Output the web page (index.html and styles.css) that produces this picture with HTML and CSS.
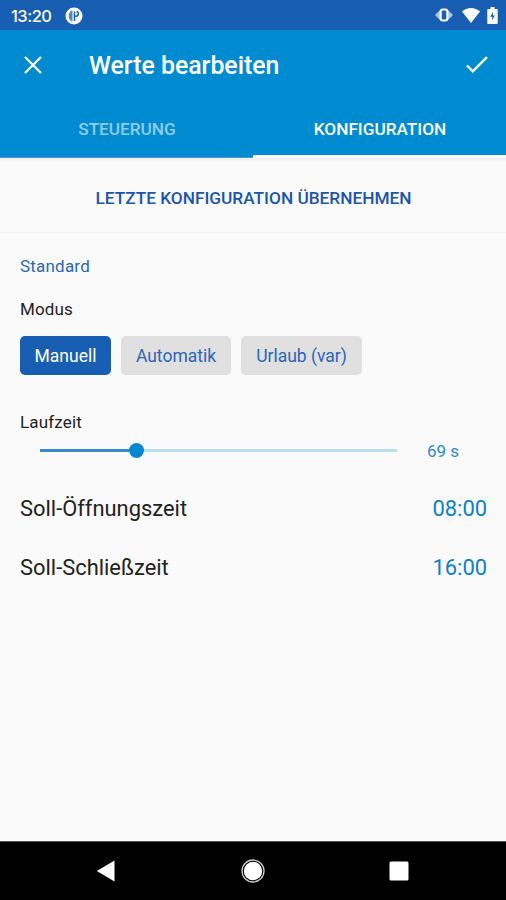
FILE: index.html
```html
<!DOCTYPE html>
<html lang="de">
<head>
<meta charset="utf-8">
<title>Werte bearbeiten</title>
<link rel="stylesheet" href="styles.css">
</head>
<body>
<div class="app">
  <header class="status">
    <span class="clock">13:20</span>
    <svg class="status-app" width="18" height="18" viewBox="0 0 18 18"><circle cx="9" cy="9" r="8.500" fill="#fff"/><path d="M7.500 3.500C5 3.800 3.700 6 3.700 9s1.300 5 3.800 5.500z" fill="#185fb4" opacity=".75"/><path d="M9.500 14V4.500M9.500 9.300h1.500q2.300-.3 2.300-2.500T11.500 4.500" fill="none" stroke="#185fb4" stroke-width="1.500"/></svg>
    <div class="status-right">
      <svg class="vibrate" width="18" height="14" viewBox="0 0 18 14"><path d="M5 2v10L0 7zM13 2v10L18 7z" fill="#fff" opacity=".65"/><rect x="5.700" y="1.500" width="6.600" height="11" rx="2" fill="none" stroke="#fff" stroke-width="2"/></svg>
      <svg class="wifi" width="20" height="17" viewBox="0 0 20 17"><path d="M1 4.500C6-.2 14-.2 19 4.500L10 16z" fill="#fff"/></svg>
      <svg class="battery" width="11" height="17" viewBox="0 0 11 17"><path d="M3.500 0h4v2H10q.7 0 .7.700v13.300q0 1-.7 1H1q-.7 0-.7-1V2.700Q.3 2 1 2h2.500z" fill="#fff"/><path d="M5.900 5 3.200 9.800h2v3.400L7.800 8.500H5.900z" fill="#185fb4"/></svg>
    </div>
  </header>
  <div class="toolbar">
    <svg class="close" width="18" height="18" viewBox="0 0 18 18"><path d="M1 1l16 16M17 1L1 17" stroke="#fff" stroke-width="2.200"/></svg>
    <h1 class="title">Werte bearbeiten</h1>
    <svg class="check" width="24" height="18" viewBox="0 0 24 18"><path d="M2 9.500l5.800 5.800L22 1.200" fill="none" stroke="#fff" stroke-width="2.400"/></svg>
  </div>
  <nav class="tabs">
    <div class="tab">STEUERUNG</div>
    <div class="tab active">KONFIGURATION</div>
  </nav>
  <div class="apply">LETZTE KONFIGURATION ÜBERNEHMEN</div>
  <main class="content">
    <div class="section">Standard</div>
    <div class="label">Modus</div>
    <div class="chips">
      <span class="chip selected">Manuell</span>
      <span class="chip auto">Automatik</span>
      <span class="chip holiday">Urlaub (var)</span>
    </div>
    <div class="label runtime">Laufzeit</div>
    <div class="slider">
      <div class="track"><span class="fill"></span><span class="thumb"></span><span class="rest"></span></div>
      <span class="amount">69 s</span>
    </div>
    <div class="row"><span>Soll-Öffnungszeit</span><span class="time">08:00</span></div>
    <div class="row"><span>Soll-Schließzeit</span><span class="time">16:00</span></div>
  </main>
  <footer class="navbar">
    <svg width="20" height="22" viewBox="0 0 20 22"><path d="M.8 11L18.500.6v20.800z" fill="#fff"/></svg>
    <svg width="24" height="24" viewBox="0 0 24 24"><circle cx="12" cy="12" r="9.200" fill="#fff"/><circle cx="12" cy="12" r="11" fill="none" stroke="#ccc" stroke-width="1.300"/></svg>
    <svg width="20" height="20" viewBox="0 0 20 20"><rect x=".5" y=".5" width="19" height="19" rx="1.500" fill="#fff"/></svg>
  </footer>
</div>
</body>
</html>
```
FILE: styles.css
```css
* { box-sizing: border-box; }
body { margin: 0; font-family: Roboto, "Liberation Sans", sans-serif; background: #fafafa; }
svg { display: block; flex: none; }
.app { width: 506px; height: 900px; display: flex; flex-direction: column; }
.status { height: 30px; background: #185fb4; color: #fff; display: flex; align-items: center; padding: 0 8px 0 11px; }
.clock { width: 54px; font: 500 16.500px/20px Inter, sans-serif; letter-spacing: -.5px; padding-top: 2px; }
.status-app { margin-top: 1px; }
.status-right { margin-left: auto; display: flex; align-items: center; gap: 6px; }
.vibrate { margin-right: 2px; }
.toolbar { height: 71px; background: #008bd0; color: #fff; display: flex; align-items: center; padding: 0 17px 2px 24px; }
.title { margin: 0 auto 0 47px; padding-top: 2px; font-size: 24.850px; line-height: 30px; font-weight: 500; }
.tabs { height: 57px; background: #008bd0; display: flex; border-bottom: 1px solid #4c9ed8; }
.tab { flex: 1; display: flex; align-items: center; justify-content: center; padding-left: 1px; font-size: 17.200px; font-weight: 500; color: #90cdec; }
.active { color: #fff; border-bottom: 3px solid #fff; margin-bottom: -1px; padding-top: 2px; }
.apply { height: 75px; display: flex; align-items: center; justify-content: center; padding: 6px 0 0 1px; color: #1b56ab; font-size: 17.250px; font-weight: 500; border-bottom: 1px solid #eee; background: linear-gradient(#eee, #fafafa 4px); }
.content { flex: 1; padding: 22px 19px 0 20px; color: #222; }
.section { color: #2c66b8; font-size: 17px; line-height: 22px; letter-spacing: .2px; }
.label { margin-top: 21px; font-size: 17px; line-height: 22px; letter-spacing: .15px; }
.chips { display: flex; gap: 10px; margin-top: 16px; }
.chip { width: 110px; height: 39px; border-radius: 5px; background: #e0e0e0; color: #2c66b8; display: flex; align-items: center; justify-content: center; font-size: 17.500px; }
.selected { width: 91px; background: #185fb4; color: #fff; }
.holiday { width: 121px; }
.runtime { margin-top: 36px; }
.slider { display: flex; align-items: center; height: 36px; padding-left: 20px; margin: -1px 0 11px; }
.track { display: flex; align-items: center; width: 357px; }
.fill { width: 89px; height: 3px; background: #3a88cb; }
.thumb { width: 15px; height: 15px; border-radius: 50%; background: #0288d1; }
.rest { flex: 1; height: 3px; background: #bbdff2; }
.amount { margin-left: 30px; padding-top: 1px; color: #2c88cb; font-size: 17px; }
.row { display: flex; justify-content: space-between; align-items: center; height: 59px; font-size: 21.900px; }
.time { color: #0d7fc9; }
.navbar { height: 59px; background: #000; border-top: 1px solid #555; display: flex; align-items: center; padding: 0 97px 0 96px; justify-content: space-between; }
```
